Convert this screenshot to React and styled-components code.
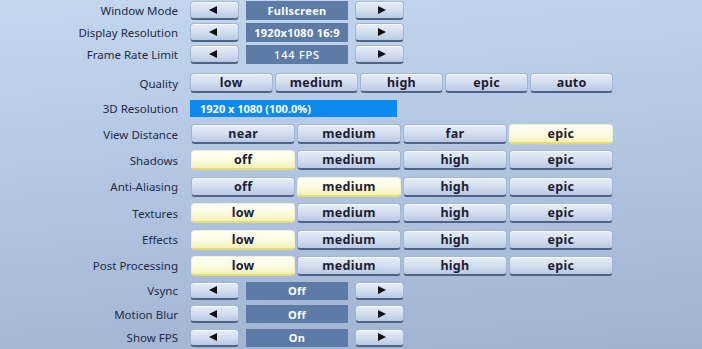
import React from "react";
import styled, { createGlobalStyle } from "styled-components";

const GlobalStyle = createGlobalStyle`
  html, body {
    margin: 0;
    padding: 0;
  }
  body {
    width: 702px;
    height: 349px;
    overflow: hidden;
    font-family: "Noto Sans", "Open Sans", sans-serif;
  }
`;

const Styled = {
  Page: styled.div`
    width: 702px;
    height: 349px;
    box-sizing: border-box;
    padding-top: 1px;
    display: flex;
    flex-direction: column;
    background: linear-gradient(175deg, #c4d7ef 0%, #b3c7e3 45%, #9fb3d1 100%);
  `,
  Group: styled.div`
    display: flex;
    flex-direction: column;
    gap: ${(p) => p.$gap}px;
    margin-top: ${(p) => p.$top || 0}px;
  `,
  Row: styled.div`
    display: grid;
    grid-template-columns: 178px 1fr;
    column-gap: ${(p) => p.$offset || 12}px;
    align-items: stretch;
    height: ${(p) => p.$h}px;
  `,
  Label: styled.div`
    display: flex;
    align-items: center;
    justify-content: flex-end;
    font-size: 11.5px;
    color: #1f2a45;
    white-space: nowrap;
  `,
  Stepper: styled.div`
    display: grid;
    grid-template-columns: 49px 102px 49px;
    column-gap: 7px;
  `,
  Choices: styled.div`
    display: grid;
    grid-template-columns: repeat(${(p) => p.$count}, 1fr);
    column-gap: ${(p) => p.$gap}px;
    width: ${(p) => p.$width}px;
  `,
  Button: styled.div`
    display: flex;
    align-items: center;
    justify-content: center;
    box-sizing: border-box;
    border-radius: 4px;
    font-size: 12.5px;
    font-weight: 700;
    letter-spacing: 0.3px;
    color: #1b2034;
    background: ${(p) =>
      p.$active
        ? "linear-gradient(180deg, #fffff6 0%, #fdfbe0 55%, #f4f1b6 100%)"
        : "linear-gradient(180deg, #e6edf8 0%, #d3dff0 50%, #b8c9e2 100%)"};
    border: 1px solid ${(p) => (p.$active ? "#f2efc9" : "#a3b5d1")};
    border-bottom: 2px solid ${(p) => (p.$active ? "#e4dd74" : "#4f6387")};
    box-shadow: inset 0 1px 0 rgba(255, 255, 255, 0.8);
  `,
  Arrow: styled.span`
    width: 0;
    height: 0;
    border-top: 4px solid transparent;
    border-bottom: 4px solid transparent;
    ${(p) =>
      p.$dir === "left"
        ? "border-right: 8px solid #111; margin-right: 4px;"
        : "border-left: 8px solid #111; margin-left: 4px;"}
  `,
  Value: styled.div`
    display: flex;
    align-items: center;
    justify-content: center;
    background: #5d7ba7;
    color: #ffffff;
    font-size: 11px;
    font-weight: ${(p) => (p.$light ? 500 : 700)};
    letter-spacing: ${(p) => (p.$light ? "0.8px" : "0.3px")};
  `,
  Bar: styled.div`
    width: 207px;
    display: flex;
    align-items: center;
    padding-left: 10px;
    box-sizing: border-box;
    background: #0b8bf0;
    color: #ffffff;
    font-size: 11px;
    font-weight: 700;
  `,
};

const stepperTop = [
  { label: "Window Mode", value: "Fullscreen" },
  { label: "Display Resolution", value: "1920x1080 16:9" },
  { label: "Frame Rate Limit", value: "144 FPS", light: true },
];

const stepperBottom = [
  { label: "Vsync", value: "Off" },
  { label: "Motion Blur", value: "Off" },
  { label: "Show FPS", value: "On" },
];

const quad = [
  { label: "View Distance", options: ["near", "medium", "far", "epic"], active: 3 },
  { label: "Shadows", options: ["off", "medium", "high", "epic"], active: 0 },
  { label: "Anti-Aliasing", options: ["off", "medium", "high", "epic"], active: 1 },
  { label: "Textures", options: ["low", "medium", "high", "epic"], active: 0 },
  { label: "Effects", options: ["low", "medium", "high", "epic"], active: 0 },
  { label: "Post Processing", options: ["low", "medium", "high", "epic"], active: 0 },
];

const StepperRow = ({ item, h }) => (
  <Styled.Row $h={h}>
    <Styled.Label>{item.label}</Styled.Label>
    <Styled.Stepper>
      <Styled.Button>
        <Styled.Arrow $dir="left" />
      </Styled.Button>
      <Styled.Value $light={item.light}>{item.value}</Styled.Value>
      <Styled.Button>
        <Styled.Arrow $dir="right" />
      </Styled.Button>
    </Styled.Stepper>
  </Styled.Row>
);

const App = () => {
  return (
    <>
      <GlobalStyle />
      <Styled.Page>
        <Styled.Group $gap={3}>
          {stepperTop.map((item) => (
            <StepperRow key={item.label} item={item} h={19} />
          ))}
        </Styled.Group>

        <Styled.Group $gap={7} $top={9}>
          <Styled.Row $h={20}>
            <Styled.Label>Quality</Styled.Label>
            <Styled.Choices $count={5} $gap={2.5} $width={423}>
              {["low", "medium", "high", "epic", "auto"].map((o) => (
                <Styled.Button key={o}>{o}</Styled.Button>
              ))}
            </Styled.Choices>
          </Styled.Row>
          <Styled.Row $h={17}>
            <Styled.Label>3D Resolution</Styled.Label>
            <Styled.Bar>1920 x 1080 (100.0%)</Styled.Bar>
          </Styled.Row>
        </Styled.Group>

        <Styled.Group $gap={6.4} $top={7}>
          {quad.map((row) => (
            <Styled.Row key={row.label} $h={20} $offset={13}>
              <Styled.Label>{row.label}</Styled.Label>
              <Styled.Choices $count={4} $gap={1.5} $width={422}>
                {row.options.map((o, i) => (
                  <Styled.Button key={o} $active={i === row.active}>
                    {o}
                  </Styled.Button>
                ))}
              </Styled.Choices>
            </Styled.Row>
          ))}
        </Styled.Group>

        <Styled.Group $gap={5.5} $top={6}>
          {stepperBottom.map((item) => (
            <StepperRow key={item.label} item={item} h={18} />
          ))}
        </Styled.Group>
      </Styled.Page>
    </>
  );
};

export default App;
